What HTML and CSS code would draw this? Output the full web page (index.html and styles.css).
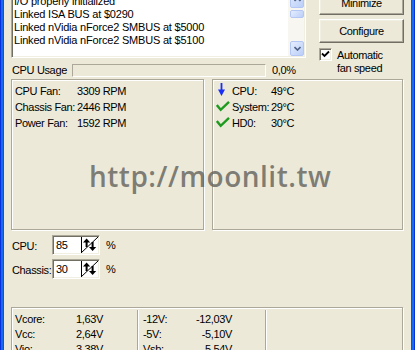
FILE: index.html
```html
<!DOCTYPE html>
<html>
<head>
<meta charset="utf-8">
<link rel="stylesheet" href="styles.css">
</head>
<body>
<div class="window">
  <div class="edge edge-l"></div>
  <div class="client">
    <div class="top">
      <div class="leftcol">
        <div class="listbox">
          <div class="lines">
            <div>I/O properly initialized</div>
            <div>Linked ISA BUS at $0290</div>
            <div>Linked nVidia nForce2 SMBUS at $5000</div>
            <div>Linked nVidia nForce2 SMBUS at $5100</div>
          </div>
          <div class="vscroll">
            <div class="sb-btn sb-up"><svg width="7" height="5" viewBox="0 0 7 5"><polyline points="0.5,4 3.5,1 6.5,4" fill="none" stroke="#4D6185" stroke-width="1.6"/></svg></div>
            <div class="sb-btn sb-thumb"></div>
            <div class="sb-btn sb-down"><svg width="7" height="5" viewBox="0 0 7 5"><polyline points="0.5,1 3.5,4 6.5,1" fill="none" stroke="#4D6185" stroke-width="1.6"/></svg></div>
          </div>
        </div>
        <div class="usage">
          <span class="usage-label">CPU Usage</span>
          <div class="progress"></div>
          <span class="pct">0,0%</span>
        </div>
      </div>
      <div class="side">
        <button class="btn">Minimize</button>
        <button class="btn">Configure</button>
        <div class="chk">
          <span class="chk-box"><svg width="9" height="9" viewBox="0 0 9 9"><path d="M1 3.5 L3.5 6 L8 1.5" fill="none" stroke="#000" stroke-width="1.8"/></svg></span>
          <span class="chk-text">Automatic<br>fan speed</span>
        </div>
      </div>
    </div>

    <div class="groups">
      <div class="grp grp-fan">
        <div class="row"><span class="fk">CPU Fan:</span><span>3309 RPM</span></div>
        <div class="row"><span class="fk">Chassis Fan:</span><span>2446 RPM</span></div>
        <div class="row"><span class="fk">Power Fan:</span><span>1592 RPM</span></div>
      </div>
      <div class="grp grp-temp">
        <div class="row"><span class="ico"><svg width="14" height="16" viewBox="0 0 14 16"><rect x="4.6" y="0" width="1.8" height="8" fill="#1a2ef5"/><path d="M2 6.5 L9 6.5 L5.5 13 Z" fill="#1a2ef5"/></svg></span><span class="tk">CPU:</span><span>49°C</span></div>
        <div class="row"><span class="ico"><svg width="14" height="16" viewBox="0 0 14 16"><path d="M0.8 6 L4.7 10.8 L13 2.8" fill="none" stroke="#1E9B1E" stroke-width="2.4"/></svg></span><span class="tk">System:</span><span>29°C</span></div>
        <div class="row"><span class="ico"><svg width="14" height="16" viewBox="0 0 14 16"><path d="M0.8 6 L4.7 10.8 L13 2.8" fill="none" stroke="#1E9B1E" stroke-width="2.4"/></svg></span><span class="tk">HD0:</span><span>30°C</span></div>
      </div>
    </div>

    <div class="spins">
      <div class="spinrow">
        <span class="spin-label">CPU:</span>
        <div class="spin"><span class="spin-field">85</span><span class="spin-btn"><svg width="17" height="16" viewBox="0 0 17 16"><rect width="17" height="16" fill="#fff"/><rect x="0" y="0" width="1" height="16" fill="#000"/><line x1="0" y1="16" x2="17" y2="0" stroke="#000" stroke-width="1"/><rect x="4.6" y="4" width="2" height="6" fill="#000"/><path d="M2 5.5 L5.6 1.5 L9.2 5.5 Z" fill="#000"/><rect x="10.6" y="5" width="2" height="6" fill="#000"/><path d="M8 10 L11.6 14 L15.2 10 Z" fill="#000"/></svg></span></div>
        <span class="pct-sign">%</span>
      </div>
      <div class="spinrow">
        <span class="spin-label">Chassis:</span>
        <div class="spin"><span class="spin-field">30</span><span class="spin-btn"><svg width="17" height="16" viewBox="0 0 17 16"><rect width="17" height="16" fill="#fff"/><rect x="0" y="0" width="1" height="16" fill="#000"/><line x1="0" y1="16" x2="17" y2="0" stroke="#000" stroke-width="1"/><rect x="4.6" y="4" width="2" height="6" fill="#000"/><path d="M2 5.5 L5.6 1.5 L9.2 5.5 Z" fill="#000"/><rect x="10.6" y="5" width="2" height="6" fill="#000"/><path d="M8 10 L11.6 14 L15.2 10 Z" fill="#000"/></svg></span></div>
        <span class="pct-sign">%</span>
      </div>
    </div>

    <div class="grp volt">
      <div class="vcol vcol1">
        <div class="vrow"><span class="vk">Vcore:</span><span>1,63V</span></div>
        <div class="vrow"><span class="vk">Vcc:</span><span>2,64V</span></div>
        <div class="vrow"><span class="vk">Vio:</span><span>3,38V</span></div>
      </div>
      <div class="vcol vcol2">
        <div class="vrow"><span>-12V:</span><span>-12,03V</span></div>
        <div class="vrow"><span>-5V:</span><span>-5,10V</span></div>
        <div class="vrow"><span>Vsb:</span><span>5,54V</span></div>
      </div>
      <div class="vcol vcol3"></div>
    </div>

    <div class="wm">http://moonlit.tw</div>
  </div>
  <div class="edge edge-r"></div>
</div>
</body>
</html>
```

FILE: styles.css
```css
* { box-sizing: border-box; margin: 0; padding: 0; }
html, body { width: 415px; height: 350px; overflow: hidden; }
body {
  background: #ECE9D8;
  font-family: "Liberation Sans", Arial, sans-serif;
  font-size: 11px;
  letter-spacing: -0.35px;
  color: #000;
}
.window { display: flex; height: 350px; }
.edge { width: 4px; flex: none; }
.edge-l { background: linear-gradient(to right, #0831D9 0, #0831D9 1px, #166AEE 1px, #166AEE 3px, #0855DD 3px); }
.edge-r { background: linear-gradient(to right, #0855DD 0, #0855DD 1px, #166AEE 1px, #166AEE 3px, #0831D9 3px); }
.client { flex: 1; position: relative; overflow: hidden; background: #ECE9D8; }

.top {
  display: grid;
  grid-template-columns: 295px 85px;
  column-gap: 13px;
  margin-top: -12px;
  margin-left: 7px;
  align-items: start;
}
.listbox {
  height: 70px;
  display: flex;
  background: #fff;
  border: 1px solid;
  border-color: #ACA899 #fff #fff #ACA899;
  padding: 1px;
  box-shadow: inset 1px 1px 0 #716F64, inset -1px -1px 0 #F1EFE2;
}
.lines {
  flex: 1;
  padding: 5px 0 0 1px;
  line-height: 13px;
  letter-spacing: -0.2px;
  white-space: nowrap;
  overflow: hidden;
}
.vscroll {
  width: 16px;
  background: #F7F6F1;
  display: flex;
  flex-direction: column;
  padding-left: 2px;
}
.sb-btn {
  border: 1px solid #B4C7F4;
  border-radius: 2px;
  background: linear-gradient(135deg, #E6EEFE, #BACEF9);
  display: flex;
  align-items: center;
  justify-content: center;
}
.sb-up { height: 18px; }
.sb-thumb { height: 8px; margin-top: 2px; }
.sb-down { height: 15px; margin-top: auto; }

.usage {
  display: flex;
  align-items: center;
  margin-top: 6px;
  height: 13px;
  padding-left: 1px;
  line-height: 13px;
}
.usage-label { width: 60px; }
.progress {
  width: 194px;
  height: 13px;
  border: 1px solid;
  border-color: #ACA899 #fff #fff #ACA899;
}
.pct { margin-left: 6px; }

.side { display: flex; flex-direction: column; margin-top: 3px; }
.btn {
  height: 24px;
  width: 85px;
  font: inherit;
  letter-spacing: inherit;
  color: #000;
  background: #ECE9D8;
  border: 1px solid;
  border-color: #fff #716F64 #716F64 #fff;
  box-shadow: inset -1px -1px 0 #ACA899, inset 1px 1px 0 #F1EFE2;
}
.btn + .btn { margin-top: 4px; }
.chk { display: flex; align-items: flex-start; margin-top: 5px; }
.chk-box {
  width: 13px;
  height: 13px;
  flex: none;
  background: #fff;
  border: 1px solid;
  border-color: #ACA899 #fff #fff #ACA899;
  box-shadow: inset 1px 1px 0 #716F64, inset -1px -1px 0 #F1EFE2;
  display: flex;
  align-items: center;
  justify-content: center;
}
.chk-text { margin-left: 5px; line-height: 13px; margin-top: 1px; }

.groups { display: flex; gap: 8px; margin: 2px 0 0 7px; }
.grp {
  border: 1px solid #ACA899;
  box-shadow: inset 1px 1px 0 #fff, 1px 1px 0 #fff;
}
.grp-fan { width: 193px; height: 151px; padding: 3px 0 0 3px; }
.grp-temp { width: 191px; height: 151px; padding: 3px 0 0 3px; }
.row { display: flex; line-height: 16px; height: 16px; white-space: nowrap; }
.fk { width: 62px; }
.ico { width: 14px; height: 16px; margin-right: 2px; display: flex; }
.tk { width: 39px; }

.spins { display: flex; flex-direction: column; gap: 4px; margin: 5px 0 0 8px; }
.spinrow { display: flex; align-items: center; height: 20px; }
.spin-label { width: 40px; padding-top: 1px; }
.spin {
  width: 48px;
  height: 20px;
  display: flex;
  border: 1px solid;
  border-color: #ACA899 #fff #fff #ACA899;
  padding: 1px;
  box-shadow: inset 1px 1px 0 #716F64, inset -1px -1px 0 #F1EFE2;
}
.spin-field { flex: 1; background: #fff; padding-left: 2px; line-height: 16px; }
.spin-btn { width: 17px; height: 16px; display: flex; }
.pct-sign { margin-left: 6px; }

.volt { margin: 28px 0 0 7px; width: 392px; height: 60px; display: flex; }
.vcol { margin-top: 2px; padding-top: 2px; line-height: 15px; }
.vrow { display: flex; white-space: nowrap; }
.vcol1 { width: 125px; padding-left: 3px; }
.vk { width: 61px; }
.vcol2 {
  width: 128px;
  border-left: 1px solid #ACA899;
  box-shadow: inset 1px 0 0 #fff;
  padding-left: 5px;
}
.vcol2 .vrow { width: 89px; justify-content: space-between; }
.vcol3 {
  flex: 1;
  border-left: 1px solid #ACA899;
  box-shadow: inset 1px 0 0 #fff;
}

.wm {
  position: absolute;
  left: 85px;
  top: 162px;
  font-family: "Open Sans", "DejaVu Sans", sans-serif;
  font-weight: 600;
  font-size: 28px;
  line-height: 28px;
  letter-spacing: 0.5px;
  color: rgba(95, 94, 90, 0.78);
  white-space: nowrap;
}
```
